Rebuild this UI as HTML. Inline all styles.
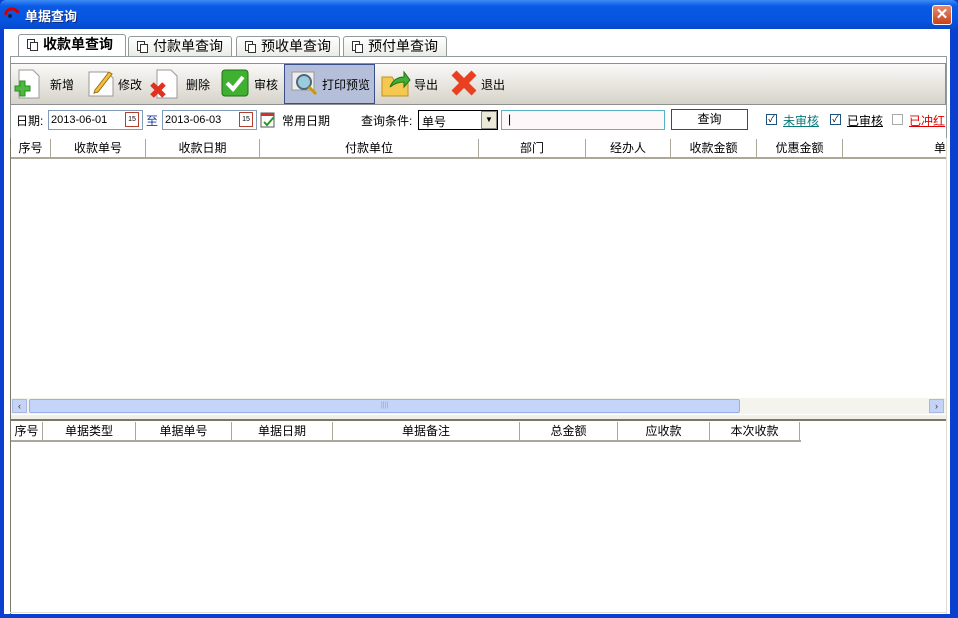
<!DOCTYPE html>
<html><head><meta charset="utf-8"><style>
*{margin:0;padding:0;box-sizing:border-box}
body{width:958px;height:618px;overflow:hidden;background:#0a3fd0;font-family:"Liberation Sans","Noto Sans CJK SC",sans-serif;font-size:12px;color:#000;position:relative}
.a{position:absolute}
.title{left:0;top:0;width:958px;height:30px;background:linear-gradient(#3d8cf5,#0a5ae6 20%,#0654e0 70%,#0845c8);border-radius:6px 6px 0 0}
.title span{position:absolute;left:25px;top:6px;color:#fff;font-weight:bold;font-size:13px;text-shadow:1px 1px #0a2a80}
.close{left:932px;top:5px;width:20px;height:20px;background:linear-gradient(#e88a6e,#c8421c);border:1px solid #fff;border-radius:3px;color:#fff;font-weight:bold;text-align:center;line-height:18px;font-size:15px}
.body{left:4px;top:29px;width:946px;height:585px;background:#fff}
.tab{top:36px;height:20px;border:1px solid #919b9c;border-bottom:none;background:linear-gradient(#fff,#ecebe6);font-size:14px;padding-left:24px;line-height:19px;border-radius:3px 3px 0 0}
.tab i{position:absolute;left:8px;top:4px;width:8px;height:10px;border:1px solid #333;background:#fff}
.tab b{position:absolute;left:11px;top:7px;width:8px;height:9px;border:1px solid #333;background:#fff}
.panel{left:10px;top:56px;width:937px;height:557px;border:1px solid #919b9c;border-bottom:none;background:#fff}
.tb{left:10px;top:63px;width:936px;height:42px;border:1px solid #8e8f8f;background:linear-gradient(#fafaf8,#e8e6e0 50%,#d6d3ca)}
.btn{top:71px;font-size:12px}
.in{top:110px;height:20px;border:1px solid #7f9db9;background:#fff;padding:3px 2px;font-size:11px;font-family:"Liberation Sans",sans-serif}
.hdr{height:20px;background:#fff;border-bottom:2px solid #aca899}
.hdr div{position:absolute;top:0;height:19px;border-right:1px solid #aca899;text-align:center;line-height:19px;font-size:12px}
.cb{top:114px;width:11px;height:11px;border:1px solid #1c5180;background:#fff;font-size:9px;line-height:9px;text-align:center}
</style></head><body>
<div class="a title"><span>单据查询</span>
<svg class="a" style="left:4px;top:7px" width="16" height="14"><path d="M2 8 A6 5 0 1 1 14 6" stroke="#c00" stroke-width="3" fill="none"/><circle cx="6" cy="9" r="2" fill="#124"/></svg></div>
<div class="a close">✕</div>
<div class="a body"></div>
<div class="a panel"></div>
<div class="a tab" style="left:18px;width:108px;top:34px;height:22px;font-weight:bold;background:#fff;z-index:2"><i></i><b></b>收款单查询</div>
<div class="a tab" style="left:128px;width:104px"><i></i><b></b>付款单查询</div>
<div class="a tab" style="left:236px;width:104px"><i></i><b></b>预收单查询</div>
<div class="a tab" style="left:343px;width:104px"><i></i><b></b>预付单查询</div>
<div class="a tb"></div>
<div class="a" style="left:284px;top:64px;width:91px;height:40px;background:#b5bfd9;border:1px solid #3a4f8a"></div>
<svg class="a" style="left:12px;top:68px" width="32" height="32"><path d="M7 2h14l6 6v22H7z" fill="#fff" stroke="#999"/><path d="M3 18h5v-5h5v5h5v5h-5v5H8v-5H3z" fill="#4cbb3c" stroke="#2a8a2a"/></svg>
<div class="a btn" style="left:50px;top:76px">新增</div>
<svg class="a" style="left:87px;top:66px" width="30" height="32"><path d="M2 6h18l6 6v18H2z" fill="#fff" stroke="#999"/><path d="M8 24l14-18 3 2-14 18-4 1z" fill="#f0c040" stroke="#a07010"/></svg>
<div class="a btn" style="left:118px;top:76px">修改</div>
<svg class="a" style="left:150px;top:68px" width="32" height="32"><path d="M7 2h14l6 6v22H7z" fill="#fff" stroke="#999"/><path d="M2 16l12 12M14 16L2 28" stroke="#e03020" stroke-width="5"/></svg>
<div class="a btn" style="left:186px;top:76px">删除</div>
<svg class="a" style="left:221px;top:69px" width="28" height="28"><rect x="1" y="1" width="26" height="26" rx="3" fill="#40b030" stroke="#207018"/><path d="M6 14l6 6 10-12" stroke="#fff" stroke-width="4" fill="none"/></svg>
<div class="a btn" style="left:254px;top:76px">审核</div>
<svg class="a" style="left:288px;top:68px" width="32" height="32"><rect x="4" y="4" width="22" height="18" fill="#eee" stroke="#999"/><circle cx="16" cy="14" r="7" fill="#9cd" stroke="#567" stroke-width="2"/><path d="M21 19l7 7" stroke="#c90" stroke-width="3"/></svg>
<div class="a btn" style="left:322px;top:76px">打印预览</div>
<svg class="a" style="left:380px;top:67px" width="32" height="32"><path d="M2 10h10l2 3h14v16H2z" fill="#f5c850" stroke="#c09020"/><path d="M10 20q4-10 14-10v-5l6 8-6 7v-5q-8 0-14 5z" fill="#40b030" stroke="#207018"/></svg>
<div class="a btn" style="left:414px;top:76px">导出</div>
<svg class="a" style="left:450px;top:69px" width="28" height="28"><path d="M4 4l20 20M24 4L4 24" stroke="#e84020" stroke-width="7"/></svg>
<div class="a btn" style="left:481px;top:76px">退出</div>

<div class="a" style="left:16px;top:112px">日期:</div>
<div class="a in" style="left:48px;width:95px">2013-06-01</div>
<div class="a" style="left:125px;top:112px;width:14px;height:15px;border:1px solid #b04030;background:#fff;font-size:7px;text-align:center;line-height:14px">15</div>
<div class="a" style="left:146px;top:112px;color:#1a3c9c">至</div>
<div class="a in" style="left:162px;width:95px">2013-06-03</div>
<div class="a" style="left:239px;top:112px;width:14px;height:15px;border:1px solid #b04030;background:#fff;font-size:7px;text-align:center;line-height:14px">15</div>
<svg class="a" style="left:260px;top:111px" width="16" height="18"><rect x="1" y="2" width="13" height="14" fill="#fff" stroke="#555"/><rect x="1" y="2" width="13" height="3" fill="#c33"/><path d="M4 11l3 3 7-8" stroke="#2a9a2a" stroke-width="2" fill="none"/></svg>
<div class="a" style="left:282px;top:112px">常用日期</div>
<div class="a" style="left:361px;top:112px">查询条件:</div>
<div class="a in" style="left:418px;width:80px;border-color:#000;font-size:12px;padding:2px 3px">单号</div>
<div class="a" style="left:481px;top:111px;width:16px;height:18px;background:#ece9d8;border:1px solid #888;font-size:8px;text-align:center;line-height:16px">▼</div>
<div class="a in" style="left:501px;width:164px;border-color:#5ab4c8;background:#fdf7f9;font-size:12px;padding:1px 6px">|</div>
<div class="a" style="left:671px;top:109px;width:77px;height:21px;border:1px solid #1c5180;background:#fff;text-align:center;line-height:19px">查询</div>
<div class="a cb" style="left:766px">✓</div><div class="a" style="left:783px;top:112px;color:#0a7a7a;text-decoration:underline">未审核</div>
<div class="a cb" style="left:830px">✓</div><div class="a" style="left:847px;top:112px;text-decoration:underline">已审核</div>
<div class="a cb" style="left:892px;border-color:#aaa"></div><div class="a" style="left:909px;top:112px;color:#d00;text-decoration:underline">已冲红</div>

<div class="a hdr" style="left:11px;top:139px;width:935px">
<div style="left:0;width:40px">序号</div><div style="left:40px;width:95px">收款单号</div><div style="left:135px;width:114px">收款日期</div><div style="left:249px;width:219px">付款单位</div><div style="left:468px;width:107px">部门</div><div style="left:575px;width:85px">经办人</div><div style="left:660px;width:86px">收款金额</div><div style="left:746px;width:86px">优惠金额</div><div style="left:832px;width:103px;border:none;text-align:right">单</div></div>
<div class="a" style="left:11px;top:398px;width:935px;height:16px;background:#f4f3ee"></div>
<div class="a" style="left:12px;top:399px;width:15px;height:14px;background:#c5d3f5;border:1px solid #a8b8e0;font-size:9px;text-align:center;line-height:12px;color:#335">‹</div>
<div class="a" style="left:29px;top:399px;width:711px;height:14px;background:#c5d5fa;border:1px solid #98aee8;border-radius:2px;font-size:7px;color:#8aa;text-align:center;line-height:12px">||||</div>
<div class="a" style="left:929px;top:399px;width:15px;height:14px;background:#c5d3f5;border:1px solid #a8b8e0;font-size:9px;text-align:center;line-height:12px;color:#335">›</div>
<div class="a" style="left:11px;top:415px;width:935px;height:6px;background:#f0efe8;border-bottom:2px solid #7a7868"></div>
<div class="a hdr" style="left:11px;top:422px;width:790px;border-bottom-color:#aca899">
<div style="left:0;width:32px">序号</div><div style="left:32px;width:93px">单据类型</div><div style="left:125px;width:96px">单据单号</div><div style="left:221px;width:101px">单据日期</div><div style="left:322px;width:187px">单据备注</div><div style="left:509px;width:98px">总金额</div><div style="left:607px;width:92px">应收款</div><div style="left:699px;width:90px">本次收款</div></div>
<div class="a" style="left:10px;top:138px;width:1px;height:476px;background:#7a7868"></div>
<div class="a" style="left:946px;top:138px;width:1px;height:476px;background:#e0ded6"></div>
<div class="a" style="left:10px;top:612px;width:937px;height:1px;background:#e0ded6"></div>
</body></html>
